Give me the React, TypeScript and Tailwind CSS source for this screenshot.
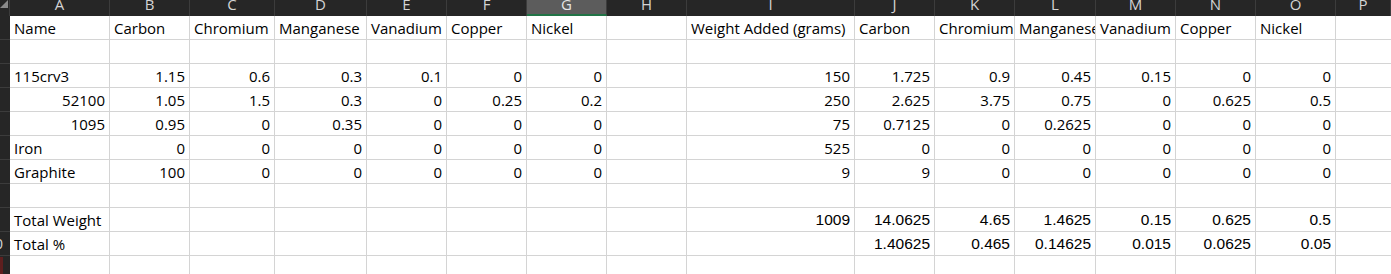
import React from "react";

const COLS = ["A", "B", "C", "D", "E", "F", "G", "H", "I", "J", "K", "L", "M", "N", "O", "P"];

type Cell = string | number | null;

// formula rows render in the Arial-like face, as in the sheet
const ROWS: { cells: Cell[]; formula?: boolean }[] = [
  {
    cells: ["Name", "Carbon", "Chromium", "Manganese", "Vanadium", "Copper", "Nickel", null, "Weight Added (grams)", "Carbon", "Chromium", "Manganese", "Vanadium", "Copper", "Nickel", null],
  },
  { cells: [] },
  { cells: ["115crv3", 1.15, 0.6, 0.3, 0.1, 0, 0, null, 150, 1.725, 0.9, 0.45, 0.15, 0, 0, null] },
  { cells: [52100, 1.05, 1.5, 0.3, 0, 0.25, 0.2, null, 250, 2.625, 3.75, 0.75, 0, 0.625, 0.5, null] },
  { cells: [1095, 0.95, 0, 0.35, 0, 0, 0, null, 75, 0.7125, 0, 0.2625, 0, 0, 0, null] },
  { cells: ["Iron", 0, 0, 0, 0, 0, 0, null, 525, 0, 0, 0, 0, 0, 0, null] },
  { cells: ["Graphite", 100, 0, 0, 0, 0, 0, null, 9, 9, 0, 0, 0, 0, 0, null] },
  { cells: [] },
  { cells: ["Total Weight", null, null, null, null, null, null, null, 1009, 14.0625, 4.65, 1.4625, 0.15, 0.625, 0.5, null], formula: true },
  { cells: ["Total %", null, null, null, null, null, null, null, null, 1.40625, 0.465, 0.14625, 0.015, 0.0625, 0.05, null], formula: true },
  { cells: [] },
];

const GRID =
  "grid grid-cols-[10px_100px_80px_85px_92px_80px_80px_80px_80px_168px_80px_80px_81px_80px_80px_80px_1fr]";

function ColumnHeader() {
  return (
    <div className={`${GRID} h-[16px] bg-[#262626]`}>
      <div className="relative overflow-hidden border-r border-[#3c3c3c]">
        <svg width="10" height="16" className="absolute left-0 top-0">
          <polygon points="8,0 8,8 0,8" fill="#8a8a8a" />
        </svg>
      </div>
      {COLS.map((c) => (
        <div
          key={c}
          className={
            c === "G"
              ? "overflow-hidden border-r border-[#3c3c3c] border-b-2 border-b-[#217346] bg-[#5c5c5c] text-center text-[15px] leading-none text-[#e6e6e6]"
              : "overflow-hidden border-r border-[#3c3c3c] text-center text-[15px] leading-none text-[#d4d4d4]"
          }
        >
          <div className="-mt-[3px]">{c}</div>
        </div>
      ))}
    </div>
  );
}

function Row({ index, cells, formula }: { index: number; cells: Cell[]; formula?: boolean }) {
  return (
    <div className={`${GRID} h-[24px]`}>
      <div className="relative overflow-hidden border-b border-[#3c3c3c] bg-[#262626]">
        <div className="-ml-[21px] w-[31px] pt-[2px] text-center text-[15px] leading-[18px] text-[#d4d4d4]">
          {index}
        </div>
        {index === 11 && <div className="absolute left-0 top-[1px] h-full w-[3px] bg-[#5e1f1f]" />}
      </div>
      {COLS.map((c, i) => {
        const v = cells[i];
        const isNum = typeof v === "number";
        return (
          <div
            key={c}
            className={`flex items-end overflow-hidden whitespace-nowrap border-b border-[#d4d4d4] bg-white px-[4px] pb-[2px] text-black ${
              c === "P" ? "" : "border-r"
            } ${isNum ? "justify-end" : "justify-start"} ${
              isNum && formula
                ? "font-['Liberation_Sans',Arial,sans-serif] text-[15.5px] leading-[18px]"
                : "text-[15px] leading-[18px]"
            }`}
          >
            {v ?? ""}
          </div>
        );
      })}
    </div>
  );
}

export default function App() {
  return (
    <div className="h-[274px] w-[1391px] overflow-hidden bg-white font-['Open_Sans',sans-serif]">
      <ColumnHeader />
      {ROWS.map((r, i) => (
        <Row key={i} index={i + 1} cells={r.cells} formula={r.formula} />
      ))}
    </div>
  );
}
